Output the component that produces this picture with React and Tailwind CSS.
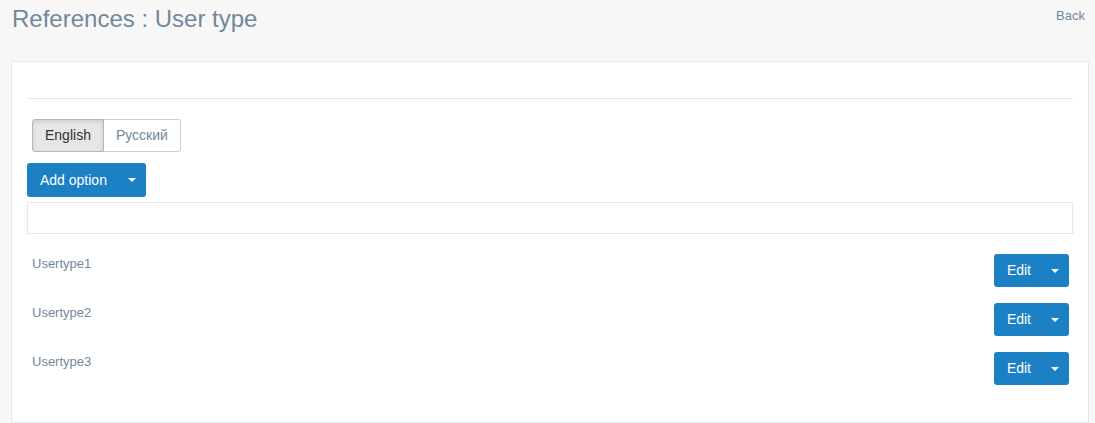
const Caret = () => (
    <span className="inline-block w-0 h-0 border-x-[4px] border-x-transparent border-t-[4px] border-t-white" />
)

const EditButton = () => (
    <div className="flex h-[33px] rounded-[3px] bg-[#1b80c4] text-white text-[14px]">
        <button className="pl-[13px] pr-[12px]">Edit</button>
        <button className="flex items-center pl-[8px] pr-[10px]">
            <Caret />
        </button>
    </div>
)

const options = ["Usertype1", "Usertype2", "Usertype3"]

export default function App() {
    return (
        <div className="min-h-[423px] bg-[#f7f7f7] text-[#73879c] font-['Liberation_Sans',Arial,sans-serif] pl-[11px] pr-[6px] pt-[5px] pb-0">
            <div className="flex items-start justify-between h-[56px]">
                <h3 className="text-[24px] leading-[28px] ml-[1px]">References : User type</h3>
                <a href="#" className="text-[13px] mt-[1px] mr-[4px]">Back</a>
            </div>

            <div className="bg-white border border-[#e6e9ed] px-[15px] pt-[36px] pb-[36px] min-h-[362px]">
                <div className="border-t border-[#e5e5e5]" />

                <div className="flex mt-[20px] ml-[5px] text-[14px]">
                    <button className="h-[33px] px-[12px] border border-[#b6b6b6] bg-[#e6e6e6] text-[#333] rounded-l-[3px] shadow-[inset_0_2px_4px_rgba(0,0,0,0.1)]">English</button>
                    <button className="h-[33px] px-[12px] border border-l-0 border-[#ccc] bg-white text-[#73879c] rounded-r-[3px]">Русский</button>
                </div>

                <div className="flex mt-[11px]">
                    <div className="flex h-[34px] rounded-[3px] bg-[#1b80c4] text-white text-[14px]">
                        <button className="pl-[13px] pr-[15px]">Add option</button>
                        <button className="flex items-center pl-[6px] pr-[10px]">
                            <Caret />
                        </button>
                    </div>
                </div>

                <div className="mt-[5px] h-[32px] border border-[#e6e9ed]" />

                <div className="flex flex-col gap-[16px] mt-[20px]">
                    {options.map((o) => (
                        <div key={o} className="flex items-start justify-between pl-[5px] pr-[4px]">
                            <span className="text-[13px]">{o}</span>
                            <EditButton />
                        </div>
                    ))}
                </div>
            </div>
        </div>
    )
}
